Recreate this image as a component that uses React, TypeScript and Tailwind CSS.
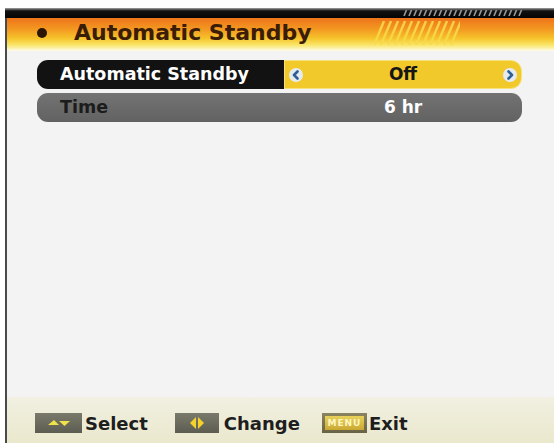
import React from "react";

const FONT = { fontFamily: '"DejaVu Sans", "Liberation Sans", sans-serif' };

function Chevron({ dir }: { dir: "left" | "right" }) {
  return (
    <span className="flex h-[14px] w-[14px] items-center justify-center rounded-full bg-[#e6ebef]">
      <svg width="10" height="10" viewBox="0 0 10 10">
        <path
          d={dir === "left" ? "M6.5 1.5 L3 5 L6.5 8.5" : "M3.5 1.5 L7 5 L3.5 8.5"}
          fill="none"
          stroke="#2f5f97"
          strokeWidth="2.6"
          strokeLinecap="round"
          strokeLinejoin="round"
        />
      </svg>
    </span>
  );
}

function KeySelect() {
  return (
    <span className="flex h-[20px] w-[47px] items-center justify-center bg-linear-to-b from-[#7a7a6c] to-[#5c5c50]">
      <svg width="26" height="10" viewBox="0 0 26 10">
        <path d="M2 7 L8 2 L13 7 Z" fill="#f2e24a" />
        <path d="M13 3 L24 3 L18.5 8 Z" fill="#f2e24a" />
      </svg>
    </span>
  );
}

function KeyChange() {
  return (
    <span className="flex h-[20px] w-[44px] items-center justify-center bg-linear-to-b from-[#7a7a6c] to-[#5c5c50]">
      <svg width="18" height="14" viewBox="0 0 18 14">
        <path d="M8 1 L2 7 L8 13 Z" fill="#f4d22a" />
        <path d="M10 1 L16 7 L10 13 Z" fill="#f4d22a" />
      </svg>
    </span>
  );
}

function KeyMenu() {
  return (
    <span className="flex h-[20px] w-[45px] items-center justify-center bg-linear-to-b from-[#8a8460] to-[#6a6446] px-[3px]">
      <span className="flex h-[14px] w-full items-center justify-center bg-linear-to-b from-[#e8d25a] to-[#c9a832] text-[9px] font-bold leading-none tracking-[1px] text-[#fff6c0]">
        MENU
      </span>
    </span>
  );
}

export default function App() {
  return (
    <div className="h-[443px] w-[554px] overflow-hidden bg-white pl-[5px] pt-[8px]" style={FONT}>
      <div className="flex h-full flex-col border-l-2 border-[#4a4a4a]">
        {/* top black band */}
        <div className="-ml-[2px] flex h-[10px] items-center justify-end bg-linear-to-b from-[#a8a8a8] via-[#111] via-30% to-[#050505] pr-[31px]">
          <svg width="120" height="6" viewBox="0 0 120 6">
            {Array.from({ length: 24 }).map((_, i) => (
              <path key={i} d={`M${i * 5 + 1} 6 L${i * 5 + 3.5} 0`} stroke="#9a9a9a" strokeWidth="1.6" />
            ))}
          </svg>
        </div>

        {/* header */}
        <div className="flex h-[33px] items-center bg-[linear-gradient(to_bottom,#ee7419_0%,#f39a22_35%,#f6c42b_62%,#f9e66a_82%,#fdfbea_100%)] pb-[3px] pl-[30px]">
          <span className="h-[10px] w-[10px] rounded-full bg-[#2b1606]" />
          <span className="ml-[27px] text-[22px] font-bold leading-none text-[#3a1c07]">Automatic Standby</span>
          <svg className="ml-auto mr-[94px]" width="86" height="24" viewBox="0 0 86 24">
            {Array.from({ length: 12 }).map((_, i) => (
              <path key={i} d={`M${i * 7} 24 L${i * 7 + 10} 0`} stroke="#f8da4a" strokeWidth="2.4" opacity="0.9" />
            ))}
          </svg>
        </div>

        {/* content */}
        <div className="flex flex-1 flex-col gap-[4px] bg-[#f3f3f3] pl-[30px] pr-[32px] pt-[9px]">
          <div className="flex h-[29px]">
            <div className="flex w-[247px] items-center rounded-l-[11px] bg-[#121212] pl-[23px] text-[17.5px] font-bold text-white">
              Automatic Standby
            </div>
            <div className="flex flex-1 items-center justify-between rounded-r-[11px] border border-[#f6e27a] bg-[#f2c92a] px-[4px]">
              <Chevron dir="left" />
              <span className="text-[17px] font-bold text-[#161616]">Off</span>
              <Chevron dir="right" />
            </div>
          </div>
          <div className="flex h-[29px] items-center rounded-[11px] bg-linear-to-b from-[#737373] to-[#626262] pl-[23px]">
            <span className="w-[324px] text-[17.5px] font-bold text-[#1c1c1c]">Time</span>
            <span className="text-[17px] font-bold text-white">6 hr</span>
          </div>
        </div>

        {/* footer */}
        <div className="flex h-[46px] items-center bg-linear-to-b from-[#f1f0e2] to-[#eae8cc] pl-[28px] pt-[6px] text-[18px] font-bold text-[#1e1e1e]">
          <KeySelect />
          <span className="ml-[3px]">Select</span>
          <span className="ml-[27px]">
            <KeyChange />
          </span>
          <span className="ml-[5px]">Change</span>
          <span className="ml-[22px]">
            <KeyMenu />
          </span>
          <span className="ml-[2px]">Exit</span>
        </div>
      </div>
    </div>
  );
}
